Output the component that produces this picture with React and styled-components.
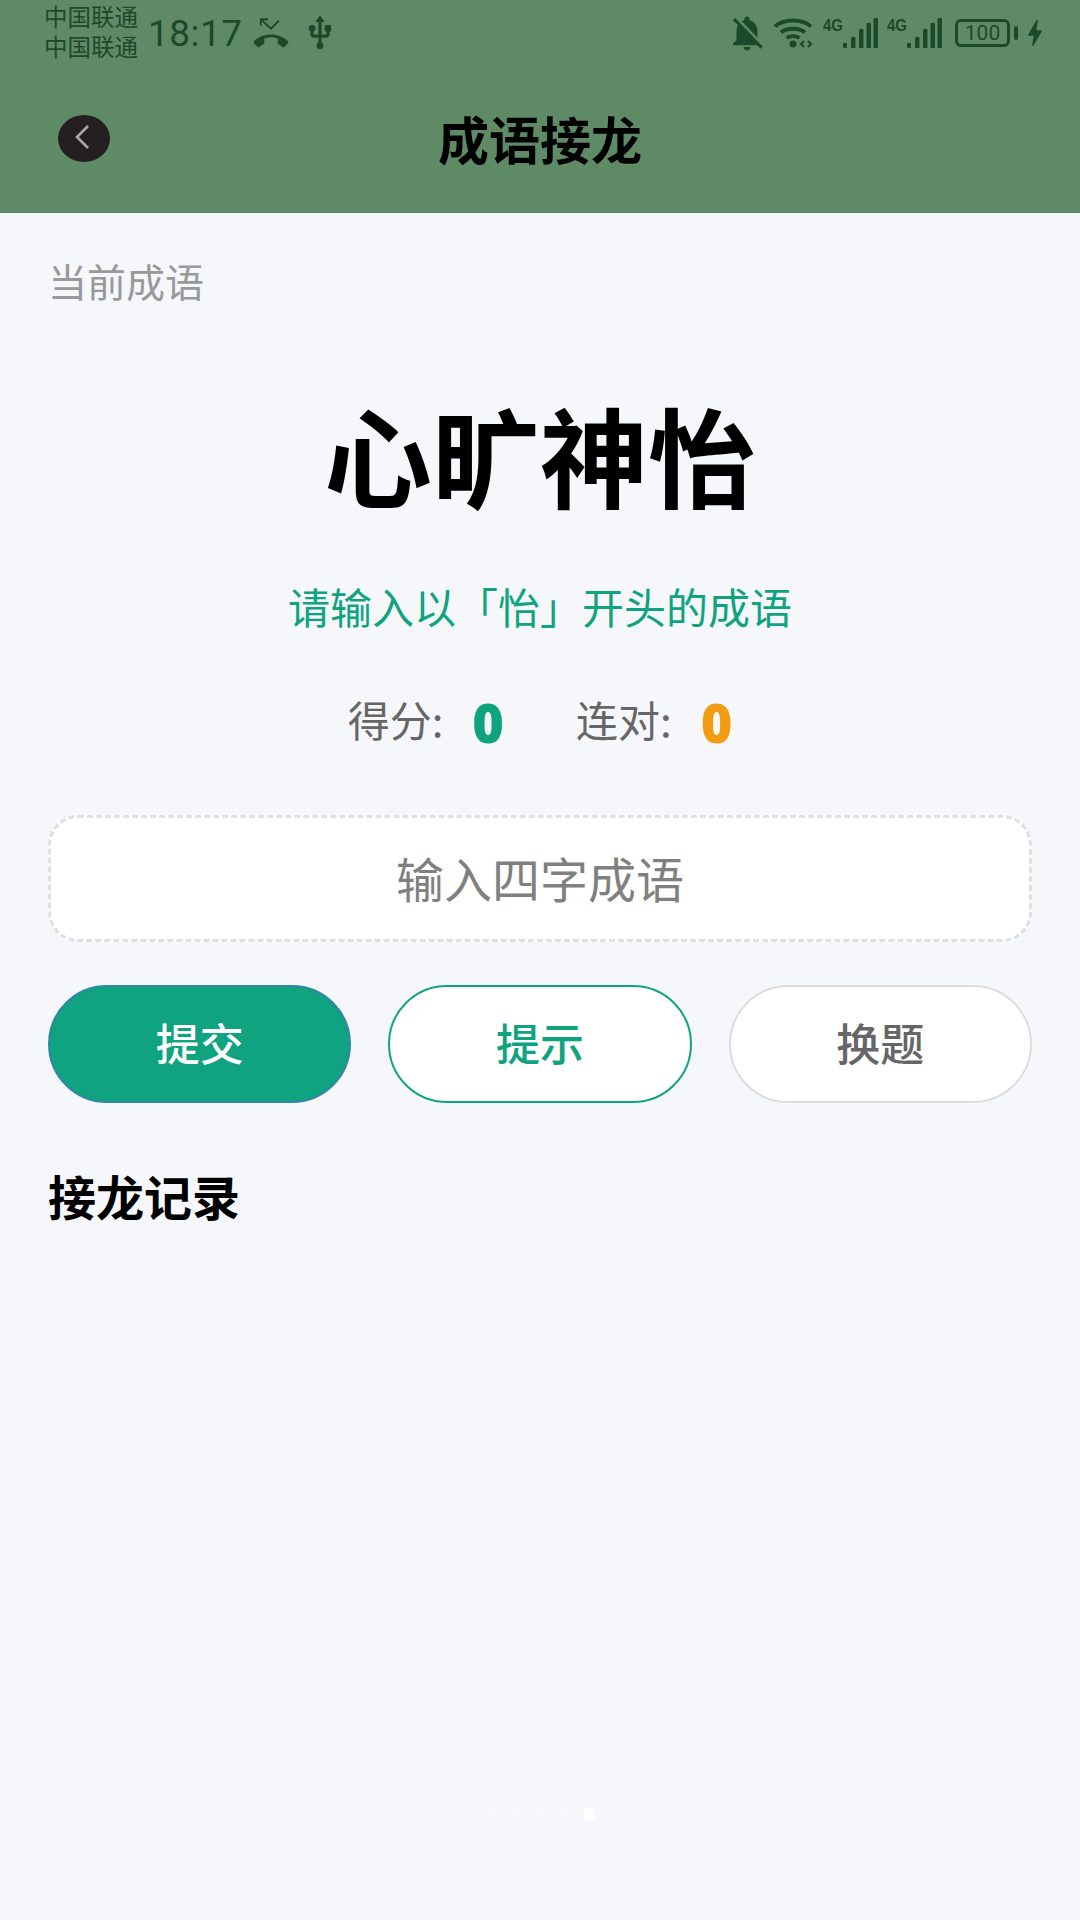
import styled, { createGlobalStyle } from "styled-components";
import { MdUsb, MdNotificationsOff, MdBolt } from "react-icons/md";

const GlobalStyle = createGlobalStyle`
  html, body { margin: 0; padding: 0; }
  body {
    width: 1080px;
    height: 1920px;
    overflow: hidden;
    background: #f5f7fb;
    font-family: "Liberation Sans", Arial, "Noto Sans CJK SC", sans-serif;
  }
`;

const STATUS_COLOR = "#1b4a2b";

function MissedCallIcon() {
  return (
    <svg width="36" height="32" viewBox="0 0 24 22" fill={STATUS_COLOR}>
      <path
        transform="translate(0 5)"
        d="M12 9c-1.600 0-3.150.25-4.600.72v3.100c0 .39-.23.74-.56.9-.98.49-1.870 1.120-2.660 1.850-.18.18-.43.28-.7.28-.28 0-.53-.11-.71-.29L.29 13.080c-.18-.17-.29-.42-.29-.7 0-.28.11-.53.29-.71C3.340 8.780 7.460 7 12 7s8.660 1.780 11.710 4.670c.18.18.29.43.29.71 0 .28-.11.53-.29.71l-2.480 2.480c-.18.18-.43.29-.71.29-.27 0-.52-.11-.7-.28-.79-.74-1.690-1.360-2.670-1.850-.33-.16-.56-.51-.56-.9v-3.100C15.150 9.250 13.600 9 12 9z"
      />
      <path d="M5 6V1.500h5M5.500 2L12 8l5.500-5.500" fill="none" stroke={STATUS_COLOR} strokeWidth="1.300" />
    </svg>
  );
}

function SignalIcon() {
  return (
    <svg width="55" height="32" viewBox="0 0 55 32" fill={STATUS_COLOR}>
      <text x="0" y="14" fontSize="16" fontWeight="700" fontFamily="Liberation Sans" textLength="20" lengthAdjust="spacingAndGlyphs">4G</text>
      <rect x="20" y="26" width="4" height="5" rx="1" />
      <rect x="28" y="20" width="4.500" height="11" rx="1" />
      <rect x="36" y="12" width="4.500" height="19" rx="1" />
      <rect x="43.500" y="6" width="4.500" height="25" rx="1" />
      <rect x="50.500" y="1" width="4.500" height="30" rx="1" />
    </svg>
  );
}

function WifiIcon() {
  return (
    <svg width="40" height="32" viewBox="0 0 40 32" fill="none" stroke={STATUS_COLOR} strokeWidth="3.800">
      <path d="M1 9.500C10 1.500 28 1.500 37 9.500" />
      <path d="M7 15.500C13 10.500 25 10.500 31 15.500" />
      <path d="M12.500 21C16 18.500 22 18.500 25.500 21" />
      <circle cx="19" cy="27" r="3.500" fill={STATUS_COLOR} stroke="none" />
      <path d="M30 24l-3 3 3 3M34 24l3 3-3 3" strokeWidth="2.200" />
    </svg>
  );
}

export default function App() {
  return (
    <>
      <GlobalStyle />
      <Page>
        <Header>
          <StatusBar>
            <StatusLeft>
              <Carriers>
                <span>中国联通</span>
                <span>中国联通</span>
              </Carriers>
              <Clock>18:17</Clock>
              <MissedCallIcon />
              <MdUsb size={38} />
            </StatusLeft>
            <StatusRight>
              <BellOff size={42} />
              <WifiIcon />
              <SignalIcon />
              <SignalIcon />
              <BatteryWrap>
                <Battery>100</Battery>
                <BatteryNub />
              </BatteryWrap>
              <Bolt size={34} />
            </StatusRight>
          </StatusBar>
          <NavBar>
            <BackButton aria-label="返回">
              <svg width="20" height="28" viewBox="0 0 20 28" fill="none" stroke="#a8a8a8" strokeWidth="2.600">
                <path d="M16 3L5 14l11 11" />
              </svg>
            </BackButton>
            <NavTitle>成语接龙</NavTitle>
          </NavBar>
        </Header>

        <Content>
          <SectionLabel>当前成语</SectionLabel>
          <Idiom>心旷神怡</Idiom>
          <Prompt>请输入以「怡」开头的成语</Prompt>
          <Stats>
            <Stat>
              <StatLabel>得分:</StatLabel>
              <StatValue $color="#10a37f">0</StatValue>
            </Stat>
            <Stat>
              <StatLabel>连对:</StatLabel>
              <StatValue $color="#f39c12">0</StatValue>
            </Stat>
          </Stats>
          <IdiomInput placeholder="输入四字成语" />
          <Buttons>
            <ActionButton $variant="primary">提交</ActionButton>
            <ActionButton $variant="hint">提示</ActionButton>
            <ActionButton $variant="plain">换题</ActionButton>
          </Buttons>
          <RecordTitle>接龙记录</RecordTitle>
        </Content>

        <PageDots>
          <Dot />
          <Dot />
          <Dot />
          <Dot />
          <Dot $active />
        </PageDots>
      </Page>
    </>
  );
}

const Page = styled.div`
  display: flex;
  flex-direction: column;
  width: 1080px;
  height: 1920px;
  background: #f5f7fb;
`;

const Header = styled.header`
  height: 213px;
  flex-shrink: 0;
  background: #5f8a66;
  display: flex;
  flex-direction: column;
`;

const StatusBar = styled.div`
  height: 66px;
  display: flex;
  justify-content: space-between;
  align-items: center;
  padding: 0 28px 0 44px;
  color: ${STATUS_COLOR};
`;

const StatusLeft = styled.div`
  display: flex;
  align-items: center;
  gap: 10px;

  svg:last-child {
    margin-left: 2px;
  }
`;

const StatusRight = styled.div`
  display: flex;
  align-items: center;
  gap: 9px;
`;

const BellOff = styled(MdNotificationsOff)`
  margin-right: -3px;
`;

const Carriers = styled.div`
  display: flex;
  flex-direction: column;
  font-family: "Liberation Sans", "Noto Sans CJK SC", sans-serif;
  font-size: 23.5px;
  line-height: 30px;
`;

const Clock = styled.span`
  font-family: Roboto, "Liberation Sans", sans-serif;
  font-size: 37px;
  letter-spacing: 0.5px;
`;

const BatteryWrap = styled.div`
  display: flex;
  align-items: center;
  gap: 4px;
  margin-left: 4px;
`;

const Battery = styled.div`
  width: 55px;
  height: 28px;
  box-sizing: border-box;
  border: 3px solid ${STATUS_COLOR};
  border-radius: 6px;
  font-family: Roboto, "Liberation Sans", sans-serif;
  font-size: 21px;
  line-height: 22px;
  text-align: center;
`;

const BatteryNub = styled.div`
  width: 4px;
  height: 14px;
  border-radius: 2px;
  background: ${STATUS_COLOR};
`;

const Bolt = styled(MdBolt)`
  margin-left: -9px;
`;

const NavBar = styled.nav`
  flex: 1;
  display: grid;
  grid-template-columns: 1fr auto 1fr;
  align-items: center;
  padding: 0 58px 3px;
`;

const BackButton = styled.button`
  width: 52px;
  height: 47px;
  padding: 0 4px 2px 0;
  border: 0;
  border-radius: 50%;
  background: #241f20;
  display: flex;
  align-items: center;
  justify-content: center;
`;

const NavTitle = styled.h1`
  margin: 0;
  font-family: "Noto Sans CJK SC", sans-serif;
  font-size: 51px;
  line-height: 60px;
  font-weight: 700;
  color: #000;
`;

const Content = styled.main`
  flex: 1;
  display: flex;
  flex-direction: column;
  padding: 44px 48px 0;
  font-family: "Noto Sans CJK SC", sans-serif;
`;

const SectionLabel = styled.div`
  font-size: 39px;
  line-height: 46px;
  color: #999;
`;

const Idiom = styled.div`
  margin-top: 85px;
  font-size: 108px;
  line-height: 130px;
  font-weight: 700;
  color: #000;
  text-align: center;
`;

const Prompt = styled.div`
  margin-top: 61px;
  font-size: 42px;
  line-height: 54px;
  color: #10a37f;
  text-align: center;
  text-spacing-trim: space-all;
`;

const Stats = styled.div`
  margin-top: 56px;
  display: flex;
  justify-content: center;
  gap: 72px;
`;

const Stat = styled.div`
  display: flex;
  align-items: center;
  gap: 29px;
`;

const StatLabel = styled.span`
  font-size: 42px;
  line-height: 60px;
  padding-bottom: 4px;
  color: #666;
`;

const StatValue = styled.span`
  font-family: "Open Sans", "Liberation Sans", sans-serif;
  font-size: 54px;
  line-height: 60px;
  padding-top: 2px;
  font-weight: 800;
  color: ${(props) => props.$color};
`;

const IdiomInput = styled.input`
  margin-top: 62px;
  height: 127px;
  box-sizing: border-box;
  border: 3px dashed #e0e0e0;
  border-radius: 30px;
  padding: 0 0 4px;
  background: #fff;
  outline: none;
  text-align: center;
  font-family: "Noto Sans CJK SC", sans-serif;
  font-size: 48px;

  &::placeholder {
    color: #808080;
    opacity: 1;
  }
`;

const VARIANTS = {
  primary: { background: "#10a37f", border: "#2f86a8", color: "#fff" },
  hint: { background: "#fff", border: "#10a37f", color: "#10a37f" },
  plain: { background: "#fff", border: "#dddddd", color: "#666" },
};

const Buttons = styled.div`
  margin-top: 43px;
  display: grid;
  grid-template-columns: repeat(3, 1fr);
  gap: 37px;
`;

const ActionButton = styled.button`
  height: 118px;
  box-sizing: border-box;
  border: 2.5px solid ${(props) => VARIANTS[props.$variant].border};
  border-radius: 59px;
  background: ${(props) => VARIANTS[props.$variant].background};
  color: ${(props) => VARIANTS[props.$variant].color};
  font-family: "Noto Sans CJK SC", sans-serif;
  font-size: 44px;
  font-weight: 500;
  padding: 0 0 4px;
`;

const RecordTitle = styled.h2`
  margin: 62px 0 0;
  font-size: 48px;
  line-height: 60px;
  font-weight: 700;
  color: #000;
`;

const PageDots = styled.div`
  display: flex;
  justify-content: center;
  align-items: center;
  gap: 14px;
  padding: 0 0 100px 2px;
`;

const Dot = styled.span`
  width: ${(props) => (props.$active ? "12px" : "10px")};
  height: ${(props) => (props.$active ? "12px" : "10px")};
  border-radius: 50%;
  background: ${(props) => (props.$active ? "#ffffff" : "#f8f9fc")};
`;
